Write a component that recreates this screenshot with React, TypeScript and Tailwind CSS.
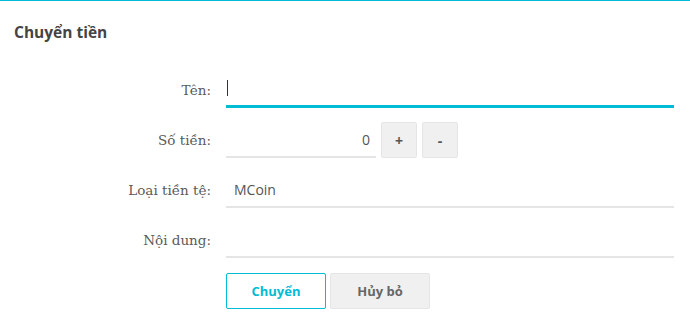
import { useState } from "react";

const labelCls =
  "w-[211px] shrink-0 text-right text-[13.5px] text-[#5a5a5a] [font-family:'DejaVu_Serif',serif]";

export default function App() {
  const [amount, setAmount] = useState(0);

  return (
    <div className="h-[333px] w-[690px] overflow-hidden border-t border-[#00bcd4] bg-white [font-family:'Open_Sans',sans-serif]">
      <h2 className="px-[14px] pt-[20px] text-[15.5px] font-bold text-[#444]">Chuyển tiền</h2>

      <div className="mt-[27px] flex flex-col gap-[14px]">
        <div className="flex items-center gap-[15px]">
          <label className={labelCls}>Tên:</label>
          <div className="flex h-[37px] w-[448px] items-center border-b-[3px] border-[#00bcd4]">
            <span className="ml-[1px] h-[16px] w-px bg-[#333]" />
          </div>
        </div>

        <div className="flex items-center gap-[15px]">
          <label className={labelCls}>Số tiền:</label>
          <div className="flex items-center gap-[5px]">
            <div className="flex h-[36px] w-[150px] items-center justify-end border-b-2 border-[#e5e5e5] pr-[6px] text-[14px] text-[#555]">
              {amount}
            </div>
            <button
              type="button"
              onClick={() => setAmount(amount + 1)}
              className="h-[36px] w-[36px] rounded-[2px] border border-[#e5e5e5] bg-[#f0f0f0] text-[14px] font-bold text-[#555]"
            >
              +
            </button>
            <button
              type="button"
              onClick={() => setAmount(Math.max(0, amount - 1))}
              className="h-[36px] w-[36px] rounded-[2px] border border-[#e5e5e5] bg-[#f0f0f0] text-[14px] font-bold text-[#555]"
            >
              -
            </button>
          </div>
        </div>

        <div className="flex items-center gap-[15px]">
          <label className={labelCls}>Loại tiền tệ:</label>
          <div className="flex h-[36px] w-[448px] items-center border-b-2 border-[#e5e5e5] pl-[8px] text-[14px] text-[#555]">
            MCoin
          </div>
        </div>

        <div className="flex items-center gap-[15px]">
          <label className={labelCls}>Nội dung:</label>
          <div className="h-[36px] w-[448px] border-b-2 border-[#e5e5e5]" />
        </div>

        <div className="flex gap-[4px] pl-[226px] pt-[1px]">
          <button
            type="button"
            className="h-[36px] w-[100px] rounded-[2px] border border-[#00bcd4] bg-white text-[13px] font-bold text-[#00bcd4]"
          >
            Chuyển
          </button>
          <button
            type="button"
            className="h-[36px] w-[100px] rounded-[2px] border border-[#e5e5e5] bg-[#f0f0f0] text-[13px] font-bold text-[#666]"
          >
            Hủy bỏ
          </button>
        </div>
      </div>
    </div>
  );
}
